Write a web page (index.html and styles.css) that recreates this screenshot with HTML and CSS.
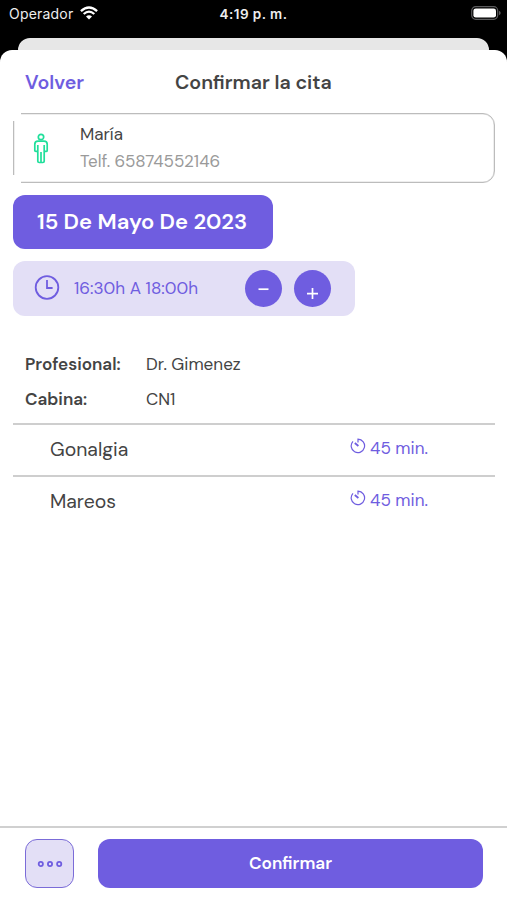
FILE: index.html
```html
<!DOCTYPE html>
<html lang="es">
<head>
<meta charset="utf-8">
<title>Confirmar la cita</title>
<link rel="stylesheet" href="styles.css">
</head>
<body>
<div class="status">
  <div class="carrier"><span class="operator">Operador</span>
    <svg class="wifi" width="18" height="14" viewBox="0 0 18 14" fill="none" stroke="#fff" stroke-width="2.3"><path d="M.9 5.2Q9-2.2 17.1 5.2M3.7 8Q9 3.3 14.3 8"/><path d="M9 13.6 6 10.6Q9 8 12 10.6Z" fill="#fff" stroke="none"/></svg>
  </div>
  <span class="clock">4:19 p. m.</span>
  <svg class="battery" width="30" height="14" viewBox="0 0 30 14"><rect x=".7" y=".7" width="26" height="12.6" rx="4" fill="none" stroke="#5b5b5d" stroke-width="1.2"/><rect x="2.4" y="2.4" width="22.6" height="9.2" rx="2.4" fill="#fff"/><path d="M28 4.7q1.7.7 1.7 2.3T28 9.3Z" fill="#5b5b5d"/></svg>
</div>
<div class="back-sheet"></div>
<main class="sheet">
  <header class="header"><a class="back">Volver</a><h1>Confirmar la cita</h1></header>
  <section class="patient">
    <svg class="person" width="16" height="31" viewBox="0 0 16 31" fill="none" stroke="#20df9b" stroke-width="1.7" stroke-linejoin="round"><circle cx="8" cy="4" r="2.7"/><path d="M5 8.2h6q3.2 0 3.2 3.1v6.1q0 1-1.2 1h-1.8v9.8q0 1.3-1.4 1.3H6.2q-1.4 0-1.4-1.3v-9.8H3q-1.2 0-1.2-1v-6.1Q1.8 8.2 5 8.2ZM4.8 12v7M11.2 12v7M8 19v10.4"/></svg>
    <div class="patient-info"><span class="name">María</span><span class="phone">Telf. 65874552146</span></div>
  </section>
  <div class="date"><span>15 De Mayo De 2023</span></div>
  <div class="time">
    <svg width="26" height="26" viewBox="0 0 26 26" fill="none" stroke="#6f5de0" stroke-width="1.8"><circle cx="13" cy="12.5" r="11.3"/><path d="M13 5v8h5.6"/></svg>
    <span class="range">16:30h A 18:00h</span>
    <button class="round"><svg width="37" height="37" viewBox="0 0 37 37" stroke="#fff" stroke-width="1.7"><path d="M13.5 19.2h10"/></svg></button>
    <button class="round"><svg width="37" height="37" viewBox="0 0 37 37" stroke="#fff" stroke-width="1.7"><path d="M13 23.6h11M18.5 18.1v11"/></svg></button>
  </div>
  <dl class="details">
    <dt>Profesional:</dt><dd>Dr. Gimenez</dd>
    <dt>Cabina:</dt><dd>CN1</dd>
  </dl>
  <ul class="treatments">
    <li><span>Gonalgia</span><span class="duration"><svg width="16" height="16" viewBox="0 0 16 16" fill="none" stroke="#6f5de0" stroke-width="1.2"><path d="M3 3.3A6.7 6.7 0 1 0 8 1.2v3.2"/><path d="m4.8 5 3.6 3" stroke-width="1.8"/></svg><span>45 min.</span></span></li>
    <li><span>Mareos</span><span class="duration"><svg width="16" height="16" viewBox="0 0 16 16" fill="none" stroke="#6f5de0" stroke-width="1.2"><path d="M3 3.3A6.7 6.7 0 1 0 8 1.2v3.2"/><path d="m4.8 5 3.6 3" stroke-width="1.8"/></svg><span>45 min.</span></span></li>
  </ul>
  <footer class="footer">
    <button class="more"><svg width="26" height="8" viewBox="0 0 26 8" fill="none" stroke="#6f5de0" stroke-width="1.8"><circle cx="3.8" cy="4" r="2.1"/><circle cx="13" cy="4" r="2.1"/><circle cx="22.2" cy="4" r="2.1"/></svg></button>
    <button class="confirm">Confirmar</button>
  </footer>
</main>
</body>
</html>
```
FILE: styles.css
```css
* { box-sizing: border-box; }
body {
  margin: 0;
  height: 900px;
  display: flex;
  flex-direction: column;
  overflow: hidden;
  background: #000;
  color: #444;
  font-family: "DM Sans", Inter, sans-serif;
}
button { border: 0; padding: 0; font: inherit; color: inherit; }
span, dd { white-space: nowrap; }
.status {
  height: 38px;
  flex: none;
  display: grid;
  grid-template-columns: 1fr auto 1fr;
  align-items: start;
  padding: 6px 6px 0 9px;
  color: #eee;
  font-family: Inter, sans-serif;
  line-height: 16px;
}
.carrier { display: flex; gap: 6px; }
.operator { width: 65px; font-size: 14px; letter-spacing: .2px; }
.clock { margin-right: 3px; font-size: 13.5px; font-weight: 600; letter-spacing: .45px; }
.battery { justify-self: end; }
.back-sheet {
  height: 12px;
  flex: none;
  margin: 0 18px;
  background: #e7e7e7;
  border-radius: 12px 12px 0 0;
}
.sheet {
  flex: 1;
  display: flex;
  flex-direction: column;
  background: #fff;
  border-radius: 12px 12px 0 0;
}
.header {
  height: 63px;
  display: grid;
  grid-template-columns: 150px auto;
  align-items: center;
  padding: 1px 0 0 25px;
}
.back { color: #6f5de0; font-size: 19.6px; font-weight: 600; }
h1 { margin: 0; font-size: 19.6px; font-weight: 600; }
.patient {
  position: relative;
  height: 70px;
  margin: 0 12px 0 13px;
  display: flex;
  align-items: center;
  gap: 31px;
  padding-left: 19px;
  border: 1px solid #bcbcbc;
  border-radius: 4px 12px 12px 4px;
  box-shadow: inset 0 0 0 .5px #ddd;
}
.patient::before, .patient::after {
  content: "";
  position: absolute;
  left: -2px;
  width: 9px;
  height: 9px;
  background: #fff;
}
.patient::before { top: -2px; }
.patient::after { bottom: -2px; }
.patient-info { display: flex; flex-direction: column; line-height: 27px; font-size: 17px; }
.phone { color: #9a9a9a; }
.date {
  width: 260px;
  height: 54px;
  margin: 12px 0 0 13px;
  display: flex;
  align-items: center;
  padding: 0 0 1px 24px;
  border-radius: 12px;
  background: #6f5de0;
  color: #fff;
  font-size: 22px;
  font-weight: 600;
}
.time {
  width: 342px;
  height: 55px;
  margin: 12px 0 0 13px;
  display: flex;
  align-items: center;
  padding: 0 0 1px 21px;
  border-radius: 12px;
  background: #e3dff6;
  color: #6f5de0;
}
.range { width: 171px; margin-left: 14px; font-size: 17.1px; }
.round { width: 37px; height: 37px; border-radius: 50%; background: #6f5de0; }
.round + .round { margin-left: 12px; }
.round svg { display: block; }
.details {
  margin: 31px 0 6px 25px;
  display: grid;
  grid-template-columns: 121px auto;
  line-height: 35px;
  font-size: 17.1px;
}
dt { font-weight: 600; }
dd { margin: 0; }
.treatments { margin: 0 12px 0 13px; padding: 0; list-style: none; }
.treatments li {
  height: 51.5px;
  display: grid;
  grid-template-columns: 300px auto;
  align-items: center;
  padding-left: 37px;
  border-top: 2px solid #cecece;
  font-size: 19.4px;
}
.duration { display: flex; align-items: center; gap: 4px; color: #6f5de0; font-size: 17.1px; line-height: 20px; margin-top: -3px; }
.duration svg { margin-top: -4px; }
.footer {
  height: 74px;
  margin-top: auto;
  display: flex;
  gap: 24px;
  padding: 11px 24px 0 25px;
  border-top: 2px solid #d0d0d0;
}
.more {
  width: 49px;
  height: 49px;
  display: grid;
  place-items: center;
  border: 1.5px solid #7b6cd8;
  border-radius: 12px;
  background: #e3dff6;
}
.confirm {
  flex: 1;
  height: 49px;
  padding-bottom: 2px;
  border-radius: 12px;
  background: #6f5de0;
  color: #fff;
  font-size: 17.2px;
  font-weight: 600;
}
```
